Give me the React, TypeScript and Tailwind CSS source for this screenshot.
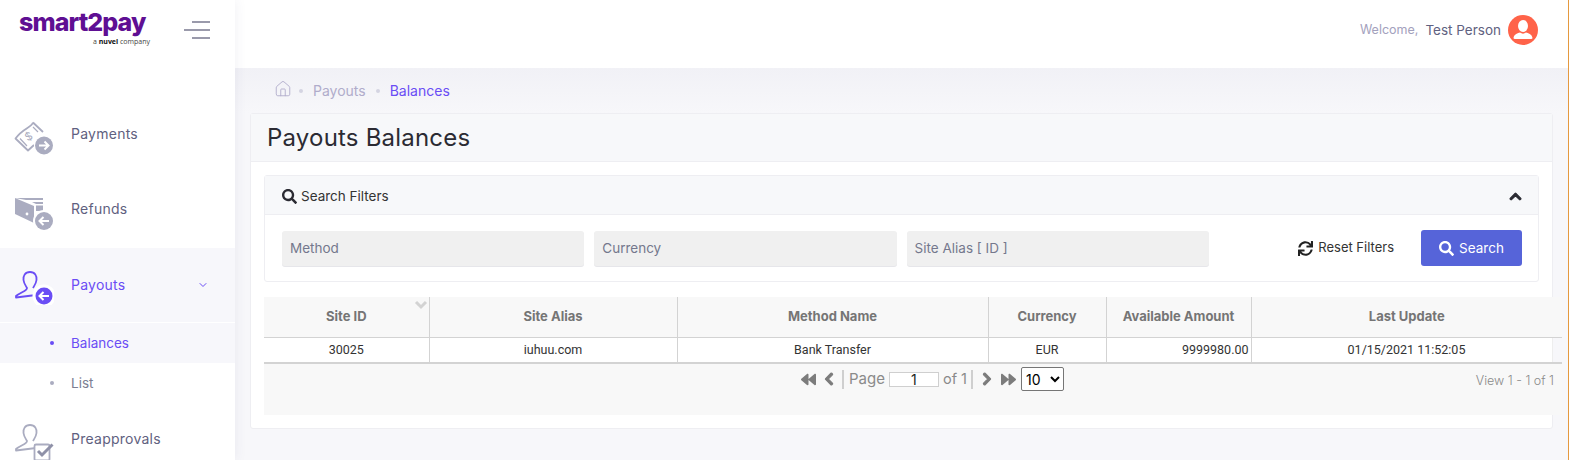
import React from 'react';
import { ChevronDown, Home } from 'lucide-react';
import {
  FaBackward,
  FaChevronLeft,
  FaChevronRight,
  FaChevronUp,
  FaForward,
  FaSearch,
  FaSync,
} from 'react-icons/fa';

const PaymentsIcon = () => (
  <svg width="40" height="40" viewBox="0 0 40 40" fill="none">
    <path d="M19 7.5 L29 17 M19 7.5 C17 13 9 13 1.5 23.5 L14 35.5 L20 30" stroke="#aaacc0" strokeWidth="1.8" strokeLinejoin="round" />
    <path d="M19 12 L24 17 M6 23.5 L13 31" stroke="#aaacc0" strokeWidth="1.2" />
    <text x="11" y="25" fontSize="11" fill="#aaacc0" fontFamily="Inter, sans-serif" transform="rotate(-30 15 21)">$</text>
    <circle cx="30" cy="30.5" r="10" fill="#fff" />
    <circle cx="30" cy="30.5" r="9" fill="#aaacc0" />
    <path d="M25 30.5 H34 M30.5 26.5 L34.5 30.5 L30.5 34.5" stroke="#fff" strokeWidth="2" fill="none" />
  </svg>
);

const RefundsIcon = () => (
  <svg width="40" height="40" viewBox="0 0 40 40" fill="none">
    <path d="M1 8 H29 V10 H12 Z" fill="#aaacc0" />
    <path d="M18 12 H29 V14 H22 Z M22 15.5 H29 V21 H22 Z" fill="#aaacc0" />
    <path d="M1 8 L20 16 V33 L1 24 Z" fill="#aaacc0" />
    <circle cx="13" cy="24" r="1.4" fill="#fff" />
    <circle cx="30" cy="31" r="11" fill="#fff" />
    <circle cx="30" cy="31" r="9" fill="#aaacc0" />
    <path d="M35 31 H26 M29.5 27 L25.5 31 L29.5 35" stroke="#fff" strokeWidth="2" fill="none" />
  </svg>
);

const PersonOutline = ({ color }: { color: string }) => (
  <g transform="translate(0 5)" stroke={color} strokeWidth="1.8" strokeLinejoin="round" fill="none">
    <path d="M16 2 C11 2 9 6 9.5 10 C10 14 12 16 13 18 C13 21 7 22 2 26 L2 27.5 L22 25" />
    <path d="M16 2 C21 2 23 6 22.5 10 C22 14 20 16 19 18" />
  </g>
);

const PayoutsIcon = () => (
  <svg width="40" height="40" viewBox="0 0 40 40" fill="none">
    <PersonOutline color="#6a4df5" />
    <circle cx="30" cy="31" r="11.5" fill="#fff" />
    <circle cx="30" cy="31" r="8.5" fill="#6a4df5" />
    <path d="M35 31 H26 M29.5 27 L25.5 31 L29.5 35" stroke="#fff" strokeWidth="2" fill="none" />
  </svg>
);

const PreapprovalsIcon = () => (
  <svg width="40" height="42" viewBox="0 0 40 42" fill="none">
    <PersonOutline color="#aaacc0" />
    <rect x="20.5" y="26.5" width="15" height="16" rx="1.5" fill="#fff" stroke="#aaacc0" strokeWidth="1.8" />
    <path d="M24 33 L28 37 L38.5 26.5" stroke="#8f91a8" strokeWidth="3" />
  </svg>
);

const MenuRow = ({ icon, label, active, height = 'h-[75px]' }: { icon: React.ReactNode; label: string; active?: boolean; height?: string }) => (
  <div className={`flex items-center pl-[14px] pr-[26px] ${height} ${active ? 'bg-[#f7f7fb] text-[#6a4df5]' : 'text-[#5f6180]'}`}>
    <div className="w-[57px] shrink-0">{icon}</div>
    <span className="-mt-[2px] flex-1 text-[14px] tracking-[0.25px]">{label}</span>
    {active && <ChevronDown size={12} strokeWidth={2} />}
  </div>
);

const SubRow = ({ label, active }: { label: string; active?: boolean }) => (
  <div className={`flex h-10 items-center pl-[50px] text-[13.5px] ${active ? 'bg-[#f7f7fb] text-[#6a4df5]' : 'text-[#7b7d92]'}`}>
    <span className={`mr-[17px] h-1 w-1 rounded-full ${active ? 'bg-[#6a4df5]' : 'bg-[#aaacc0]'}`} />
    {label}
  </div>
);

const Sidebar = () => (
  <aside className="relative z-20 w-[235px] shrink-0 bg-white shadow-[0_0_12px_rgba(60,60,110,0.08)]">
    <div className="flex h-[97px] items-start pl-[19px] pr-[25px] pt-[9px]">
      <div className="w-[131px] shrink-0">
        <div className="whitespace-nowrap text-[25px] font-extrabold leading-[26px] tracking-[-0.9px] text-[#5f0f93]">smart2pay</div>
        <div className="mt-[2px] text-right text-[7px] leading-[9px] text-[#444] [font-family:'Open_Sans',sans-serif]">
          a <b className="text-[#111]">nuvei</b> company
        </div>
      </div>
      <div className="ml-auto mt-[12px] flex w-[26px] flex-col items-end gap-[6px]">
        <span className="h-[2px] w-[18px] bg-[#9a9aab]" />
        <span className="h-[2px] w-[26px] bg-[#9a9aab]" />
        <span className="h-[2px] w-[18px] bg-[#9a9aab]" />
      </div>
    </div>
    <MenuRow icon={<PaymentsIcon />} label="Payments" />
    <MenuRow icon={<RefundsIcon />} label="Refunds" />
    <div className="h-px bg-white" />
    <MenuRow icon={<PayoutsIcon />} label="Payouts" active height="h-[74px]" />
    <div className="h-px bg-white" />
    <SubRow label="Balances" active />
    <SubRow label="List" />
    <MenuRow icon={<PreapprovalsIcon />} label="Preapprovals" height="h-[72px]" />
  </aside>
);

const Header = () => (
  <header className="flex h-[68px] shrink-0 items-center justify-end bg-white pb-[8px] pr-[30px]">
    <span className="mr-[7px] text-[12.5px] text-[#a3a1bd]">Welcome,</span>
    <span className="mr-[7px] text-[13.5px] text-[#5f6180]">Test Person</span>
    <div className="flex h-[30px] w-[30px] items-center justify-center overflow-hidden rounded-full bg-[#ff6349]">
      <svg width="30" height="30" viewBox="0 0 30 30" fill="#fff">
        <ellipse cx="15" cy="11" rx="5" ry="6" />
        <path d="M5.5 23 C6 19 10 18 12 17.5 C14 19 16 19 18 17.5 C20 18 24 19 24.5 23 Q24.5 24 23 24 H7 Q5.5 24 5.5 23 Z" />
      </svg>
    </div>
  </header>
);

const FilterInput = ({ label }: { label: string }) => (
  <div className="flex h-[35px] w-[302.3px] items-center rounded-[3px] bg-[#f0f0f0] pl-2 pt-[1px] text-[13.5px] text-[#74788d] shadow-[0_1px_0_#e6e6ea]">
    {label}
  </div>
);

const COLUMNS = ['Site ID', 'Site Alias', 'Method Name', 'Currency', 'Available Amount', 'Last Update'];
const WIDTHS = ['w-[165px]', 'w-[248px]', 'w-[311px]', 'w-[118px]', 'w-[145px]', 'w-[301px]', 'w-[10px]'];

const BalancesTable = () => (
  <div className="mt-[15px] w-[1298px]">
    <table className="w-[1298px] table-fixed border-collapse">
      <colgroup>
        {WIDTHS.map(w => <col key={w} className={w} />)}
      </colgroup>
      <thead>
        <tr className="h-[40px] bg-[#f8f8f8] text-[13px] text-[#757575]">
          {COLUMNS.map((col, i) => (
            <th key={col} className={`relative border-b border-[#d3d3d3] font-bold ${i < 5 ? 'border-r' : 'pl-[10px]'}`}>
              {col}
              {i === 0 && (
                <svg className="absolute right-[1px] top-[3px]" width="14" height="10" viewBox="0 0 14 10" fill="none">
                  <path d="M2 2 L7 7 L12 2" stroke="#d3d3d3" strokeWidth="3" />
                </svg>
              )}
            </th>
          ))}
          <th className="border-b border-[#d3d3d3]" />
        </tr>
      </thead>
      <tbody>
        <tr className="h-[25px] text-[12.5px] text-[#333] [font-family:Roboto,sans-serif]">
          <td className="border-r border-[#d3d3d3] pt-[1px] text-center">30025</td>
          <td className="border-r border-[#d3d3d3] pt-[1px] text-center">iuhuu.com</td>
          <td className="border-r border-[#d3d3d3] pt-[1px] text-center">Bank Transfer</td>
          <td className="border-r border-[#d3d3d3] pt-[1px] text-center">EUR</td>
          <td className="border-r border-[#d3d3d3] pr-[2px] pt-[1px] text-right">9999980.00</td>
          <td className="border-r border-[#eeeeee] pl-[10px] pt-[1px] text-center">01/15/2021 11:52:05</td>
          <td />
        </tr>
      </tbody>
    </table>
    <div className="flex h-[53px] w-[1298px] items-start border-t-2 border-[#d3d3d3] bg-[#f8f8f8] pt-[3px] text-[#9a9a9a]">
      <div className="ml-[537px] flex items-center text-[#7c7c7c]">
        <FaBackward size={15} />
        <FaChevronLeft size={14} className="ml-[6px] [stroke-width:40px]" />
        <span className="ml-[6px] h-[19px] w-[2px] bg-[#cfcfcf]" />
        <span className="ml-[5px] text-[15px] text-[#8a8a8a]">Page</span>
        <span className="ml-[4px] h-[15px] w-[50px] border border-[#cfcfcf] bg-white text-center text-[14px] leading-[13px] text-[#222]">1</span>
        <span className="ml-[4px] text-[14.5px] text-[#8a8a8a]">of 1</span>
        <span className="ml-[4px] h-[19px] w-[2px] bg-[#cfcfcf]" />
        <FaChevronRight size={14} className="ml-[7px] [stroke-width:40px]" />
        <FaForward size={15} className="ml-[7px]" />
        <select defaultValue="10" className="ml-[5px] h-6 w-[43px] rounded-[2px] border border-[#767676] bg-white text-[14px] text-black">
          <option value="10">10</option>
        </select>
      </div>
      <span className="ml-auto mr-[8px] mt-[5px] text-[12.5px] font-light text-[#8a8a8a]">View 1 - 1 of 1</span>
    </div>
  </div>
);

export default function App() {
  return (
    <div className="flex h-[460px] w-[1570px] overflow-hidden bg-white text-[#333] [font-family:Inter,sans-serif]">
      <Sidebar />
      <div className="flex w-[1334px] shrink-0 flex-col border-r border-[#e5993f]">
        <Header />
        <main className="flex-1 bg-[linear-gradient(#f1f1f6,#f7f7fa_45px)] pl-[15px] pr-[15px]">
          <nav className="flex h-[45px] items-center pl-[24px] text-[14px] text-[#b0accb]">
            <Home size={18} strokeWidth={1.2} className="-mt-[3px]" />
            <span className="ml-[7px] mr-[10px] h-1 w-1 rounded-full bg-[#d4d4e2]" />
            <span>Payouts</span>
            <span className="mx-[10px] h-1 w-1 rounded-full bg-[#d4d4e2]" />
            <span className="text-[#6a4df5]">Balances</span>
          </nav>
          <section className="h-[316px] rounded-[3px] border border-[#eeeef2] bg-white">
            <div className="flex h-[48px] items-center border-b border-[#eeeef2] bg-[#f7f8fa] pl-[16px] text-[24px] tracking-[0.2px] text-[#2b2b33]">
              Payouts Balances
            </div>
            <div className="px-[13px] pt-[13px]">
              <div className="rounded-[3px] border border-[#eeeef2]">
                <div className="flex h-[39px] items-center justify-between border-b border-[#eeeef2] bg-[#f7f8fa] pl-[17px] pr-[16px] pt-[2px] text-[13.5px] text-[#333]">
                  <span className="flex items-center gap-[4px]">
                    <FaSearch size={15} className="text-[#2b2b33]" />
                    Search Filters
                  </span>
                  <FaChevronUp size={13} className="text-[#2b2b33] [stroke-width:40px]" />
                </div>
                <div className="flex h-[66px] items-center gap-[10px] pl-[17px] pr-[16px]">
                  <FilterInput label="Method" />
                  <FilterInput label="Currency" />
                  <FilterInput label="Site Alias [ ID ]" />
                  <button className="ml-auto flex items-center gap-[5px] text-[13px] text-[#333]">
                    <FaSync size={15} className="text-[#222]" />
                    Reset Filters
                  </button>
                  <button className="ml-[17px] flex h-9 w-[101px] items-center justify-center gap-[5px] rounded-[3px] bg-[#5664d9] text-[13.5px] text-white">
                    <FaSearch size={15} />
                    Search
                  </button>
                </div>
              </div>
              <BalancesTable />
            </div>
          </section>
        </main>
      </div>
    </div>
  );
}
